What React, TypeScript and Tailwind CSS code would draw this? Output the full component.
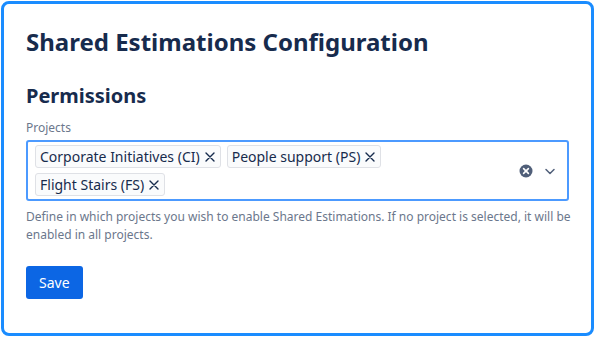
import React from 'react';

const projects = ['Corporate Initiatives (CI)', 'People support (PS)', 'Flight Stairs (FS)'];

const Chip = ({ label }: { label: string }) => (
    <div className="flex items-center h-[23px] pl-[4px] pr-[3px] border border-[#dfe1e6] rounded-[3px] bg-[#fafbfc] text-[14px] text-[#172b4d] leading-none">
        <span>{label}</span>
        <svg width="14" height="14" viewBox="0 0 14 14" className="ml-[3px]">
            <path d="M3 3 L11 11 M11 3 L3 11" stroke="#172b4d" strokeWidth="1.4" strokeLinecap="round" />
        </svg>
    </div>
);

export default function App() {
    return (
        <div className="w-[595px] h-[337px] p-[1px] bg-white" style={{ fontFamily: '"Noto Sans", "Liberation Sans", sans-serif' }}>
            <div className="w-full h-full border-[3px] border-[#1a8cff] rounded-[8px] pt-[23px] pl-[22px] pr-[20px]">
                <h1 className="text-[24px] font-bold text-[#172b4d] leading-[30px]">Shared Estimations Configuration</h1>
                <h2 className="mt-[27px] text-[20px] font-bold text-[#172b4d] leading-[24px]">Permissions</h2>
                <div className="mt-[12px] text-[12px] text-[#6b778c] leading-[16px]">Projects</div>
                <div className="mt-[4px] mr-[2px] flex items-center min-h-[61px] border-2 border-[#4c9aff] rounded-[3px] pl-[7px] pr-[10px] py-[3px]">
                    <div className="flex-1 flex flex-wrap gap-x-[6px] gap-y-[5px] pr-[14px]">
                        {projects.map((p) => (
                            <Chip key={p} label={p} />
                        ))}
                    </div>
                    <div className="flex items-center gap-[10px] self-center mt-[1px]">
                        <svg width="14" height="14" viewBox="0 0 14 14">
                            <circle cx="7" cy="7" r="6.5" fill="#505f79" />
                            <path d="M4.6 4.6 L9.4 9.4 M9.4 4.6 L4.6 9.4" stroke="white" strokeWidth="1.6" strokeLinecap="round" />
                        </svg>
                        <svg width="14" height="14" viewBox="0 0 14 14">
                            <path d="M3 5.5 L7 9.5 L11 5.5" fill="none" stroke="#505f79" strokeWidth="1.5" strokeLinecap="round" strokeLinejoin="round" />
                        </svg>
                    </div>
                </div>
                <p className="mt-[7px] text-[12px] text-[#6b778c] leading-[18px]">
                    Define in which projects you wish to enable Shared Estimations. If no project is selected, it will be enabled in all projects.
                </p>
                <button className="mt-[22px] h-[33px] px-[13px] bg-[#0c66e4] text-white text-[14px] rounded-[3px]">Save</button>
            </div>
        </div>
    );
}
